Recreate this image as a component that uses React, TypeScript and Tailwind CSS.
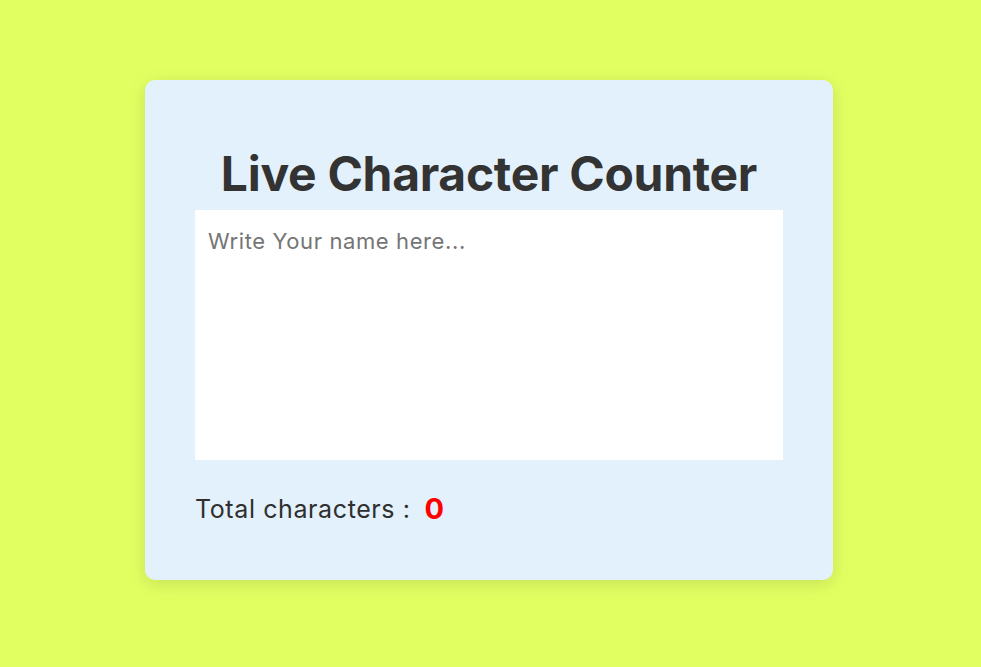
import { useState } from "react";

export default function App() {
  const [text, setText] = useState("");

  return (
    <div className="min-h-screen w-full bg-[#e2ff62] flex justify-center pt-[80px] pr-[3px] font-['Inter',sans-serif]">
      <div className="w-[688px] h-[500px] bg-[#e3f1fc] rounded-[10px] shadow-[0_4px_18px_rgba(0,0,0,0.12)] px-[50px] pt-[70px] flex flex-col">
        <h1 className="text-center text-[48px] leading-none font-bold text-[#333333] tracking-[-0.3px]">
          Live Character Counter
        </h1>
        <textarea
          value={text}
          onChange={(e) => setText(e.target.value)}
          placeholder="Write Your name here..."
          className="mt-[12px] h-[250px] w-full resize-none bg-white outline-none px-[13px] py-[16px] text-[22px] leading-[30px] tracking-[0.6px] text-[#333] placeholder:text-[#757575]"
        />
        <div className="mt-[34px] flex items-center text-[25px] leading-[30px] tracking-[0.6px] text-[#2f2f2f]">
          <span>Total characters :</span>
          <span className="ml-[14px] text-[#ff0000] font-bold text-[29px]">{text.length}</span>
        </div>
      </div>
    </div>
  );
}
